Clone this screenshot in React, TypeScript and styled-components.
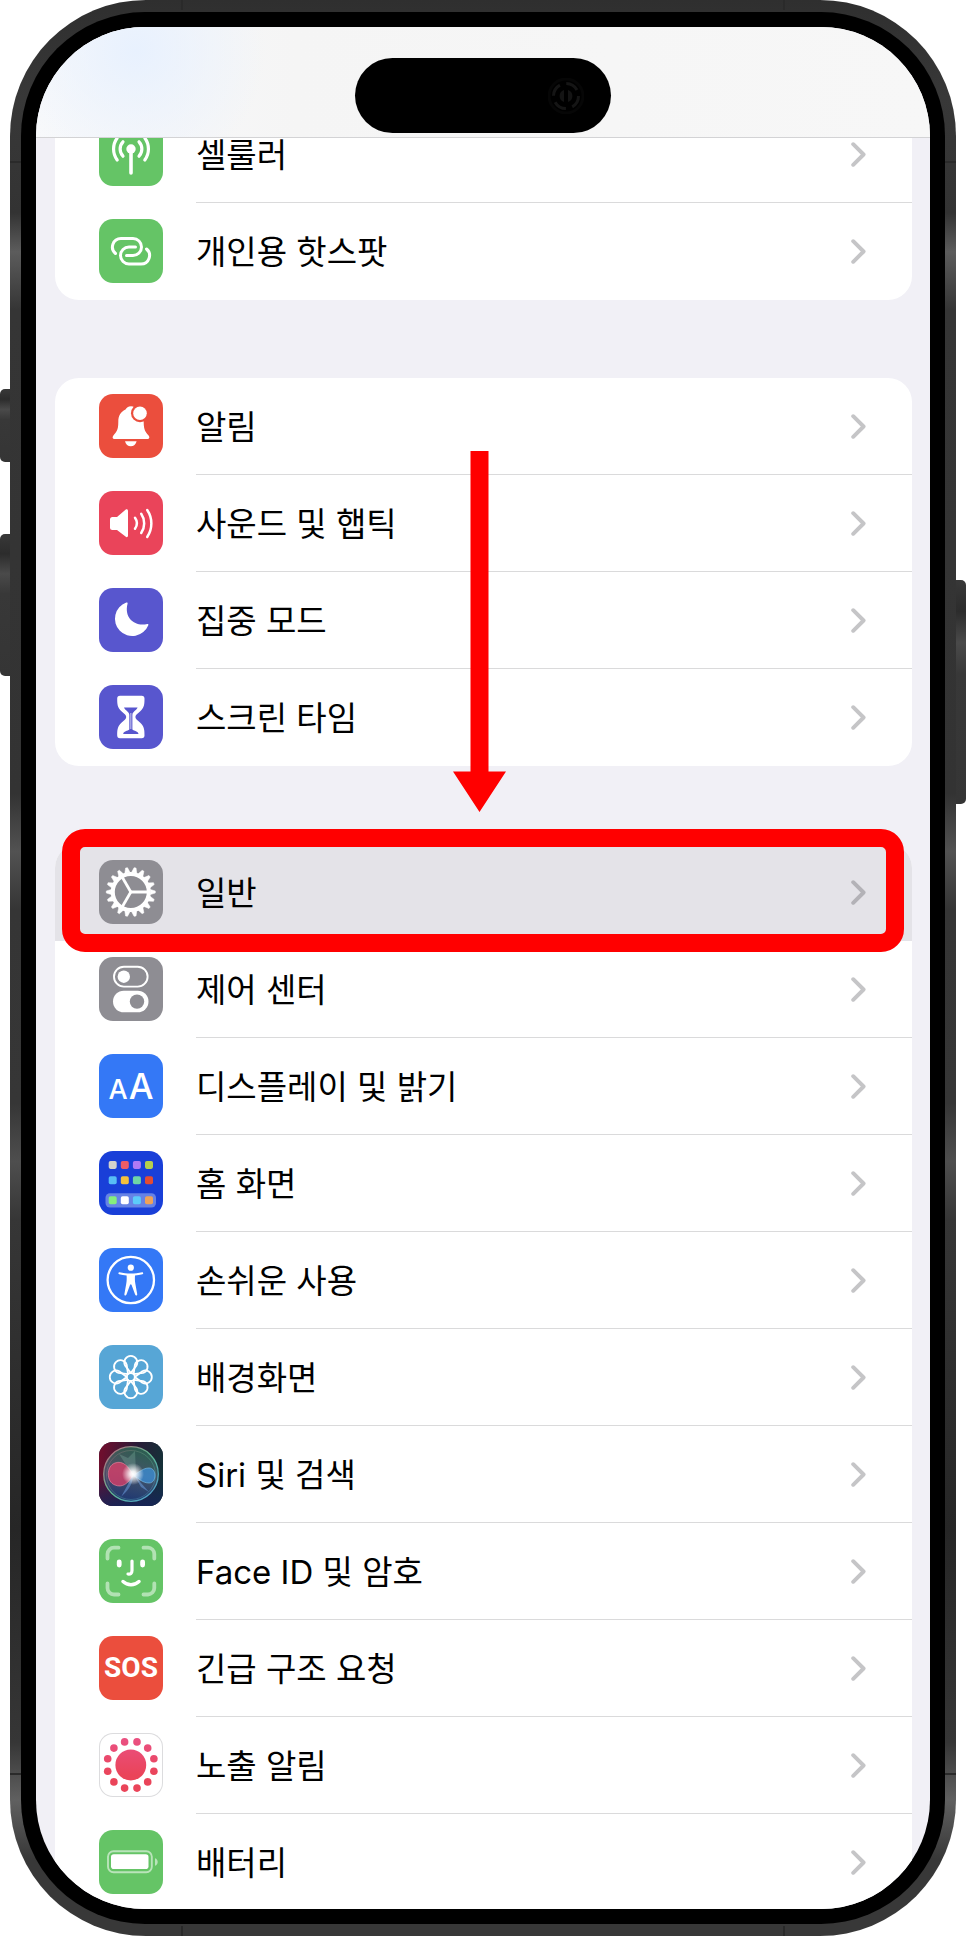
import React from 'react';
import styled, { createGlobalStyle, css } from 'styled-components';

const GlobalStyle = createGlobalStyle`
  *, *::before, *::after { box-sizing: border-box; }
  html, body { margin: 0; background: #fff; }
  body {
    font-family: Inter, "Noto Sans CJK KR", "Noto Sans", sans-serif;
    color: #000;
  }
`;

const Stage = styled.div`
  position: relative;
  height: 100vh;
  min-height: 480px;
  padding: 0 10px;
`;

const Frame = styled.div`
  height: 100%;
  padding: 12px 11px;
  border-radius: 136px;
  background: linear-gradient(
    180deg,
    #2f2f2f 0%, #383838 5%, #333 11%, #5c5c5c 13%, #353535 16%,
    #333 41%, #525252 44%, #353535 47%, #363636 57%, #4e4e4e 60%,
    #363636 63%, #262626 79%, #363636 90%, #606060 93%, #383838 96%
  );
`;

const Bezel = styled.div`
  height: 100%;
  padding: 15px;
  border-radius: 124px;
  background: #000;
`;

const Screen = styled.div`
  position: relative;
  height: 100%;
  overflow: hidden;
  border-radius: 109px;
  background: #f1f0f6;
`;

const SideButton = styled.span<{ $side: 'left' | 'right'; $top: number; $length: number }>`
  position: absolute;
  top: ${(p) => p.$top}px;
  ${(p) => p.$side}: 0;
  width: 10px;
  height: ${(p) => p.$length}px;
  border-radius: ${(p) => (p.$side === 'left' ? '5px 0 0 5px' : '0 5px 5px 0')};
  background: linear-gradient(180deg, #383838, #2c2c2c 14%, #4a4a4a 28%, #383838 42%, #353535);
`;

const AntennaLine = styled.span<{ $v: 'top' | 'bottom'; $h: 'left' | 'right'; $upright?: boolean }>`
  position: absolute;
  ${(p) =>
    p.$upright
      ? css`
          ${p.$v}: 0;
          ${p.$h}: 181px;
          width: 2px;
          height: 10px;
        `
      : css`
          ${p.$v}: 161px;
          ${p.$h}: 10px;
          width: 11px;
          height: 2px;
        `}
  background: #2a2a2a;
`;

const StatusBar = styled.header`
  position: absolute;
  inset: 0 0 auto;
  z-index: 2;
  display: flex;
  justify-content: center;
  align-items: flex-start;
  height: 111px;
  padding-top: 31px;
  border-bottom: 1px solid #d3d3d5;
  background:
    radial-gradient(circle at 100px 24px, #e8f1fe 0, rgba(240, 244, 250, 0) 130px),
    linear-gradient(90deg, #f8f9fb 0, #f5f5f5 260px, #f7f7f7 100%);
`;

const Island = styled.div`
  display: flex;
  justify-content: flex-end;
  align-items: center;
  width: 256px;
  height: 75px;
  padding-right: 27px;
  border-radius: 38px;
  background: #000;
`;

const Scroller = styled.main`
  display: flex;
  flex-direction: column;
  gap: 78px;
  height: 100%;
  padding: 79px 18px 0 19px;
  overflow-y: auto;
  scrollbar-width: none;
`;

const Group = styled.ul<{ $continued?: boolean }>`
  position: relative;
  flex: none;
  margin: 0;
  padding: 0;
  list-style: none;
  border-radius: ${(p) => (p.$continued ? '0 0 24px 24px' : '24px')};
  background: #fff;
`;

const Item = styled.li`
  position: relative;
`;

const RowLink = styled.a<{ $pressed?: boolean }>`
  display: flex;
  gap: 33px;
  height: 97px;
  padding-left: 44px;
  color: inherit;
  text-decoration: none;
  ${(p) =>
    p.$pressed &&
    css`
      border-radius: 24px 24px 0 0;
      background: #e4e3e8;
    `}
`;

const RowBody = styled.span<{ $divided: boolean }>`
  display: flex;
  flex: 1;
  align-items: center;
  justify-content: space-between;
  height: 100%;
  padding-right: 46px;
  border-bottom: 1px solid ${(p) => (p.$divided ? '#dadadb' : 'transparent')};
`;

const Label = styled.span`
  padding-top: 2px;
  font-size: 33px;
  line-height: 48px;
  white-space: nowrap;
`;

const Tile = styled.span<{ $bg: string; $outlined?: boolean }>`
  display: flex;
  flex: none;
  align-items: center;
  justify-content: center;
  width: 64px;
  height: 64px;
  margin-top: 16px;
  overflow: hidden;
  border-radius: 14px;
  background: ${(p) => p.$bg};
  box-shadow: ${(p) => (p.$outlined ? 'inset 0 0 0 1px #dcdcde' : 'none')};
  color: #fff;
`;

const SizeLetters = styled.span`
  display: flex;
  align-items: baseline;
  gap: 1px;
  padding-top: 3px;
  font-size: 27px;
  font-weight: 500;
  line-height: 40px;
`;

const LargeLetter = styled.span`
  font-size: 35px;
`;

const Sos = styled.span`
  font-family: Roboto, "Liberation Sans", sans-serif;
  font-size: 28px;
  font-weight: 700;
  line-height: 40px;
`;

const Highlight = styled.span`
  position: absolute;
  inset: -15px 8px -11px 7px;
  z-index: 1;
  border: 18px solid #f00;
  border-radius: 23px;
  pointer-events: none;
`;

const Arrow = styled.svg`
  position: absolute;
  top: 73px;
  left: calc(50% - 31px);
  z-index: 1;
  pointer-events: none;
`;

const Drawing = ({ children }: { children: React.ReactNode }) => (
  <svg width="64" height="64" viewBox="0 0 64 64" fill="none" stroke="none" aria-hidden="true">
    {children}
  </svg>
);

const range = (n: number) => Array.from({ length: n }, (_, i) => i);

const Cellular = () => (
  <Drawing>
    <g stroke="#fff" strokeWidth="3.2" strokeLinecap="round">
      <path d="M32 28V51" strokeWidth="3.6" />
      <path d="M24 34.2A10.5 10.5 0 0 1 24 19.8M40 34.2A10.5 10.5 0 0 0 40 19.8" />
      <path d="M18.2 38A18.5 18.5 0 0 1 18.2 16M45.8 38A18.5 18.5 0 0 0 45.8 16" />
    </g>
    <circle cx="32" cy="27" r="4.7" fill="#fff" />
  </Drawing>
);

const Hotspot = () => (
  <Drawing>
    <g stroke="#fff" strokeWidth="3" strokeLinecap="round">
      <path d="M16.5 34.5A8.5 8.5 0 0 1 22 19.5H34A8.5 8.5 0 0 1 34 36.5H27.5" />
      <path d="M47.5 30A8.5 8.5 0 0 1 42 45H30A8.5 8.5 0 0 1 30 28H36.5" />
    </g>
  </Drawing>
);

const Bell = () => (
  <Drawing>
    <path
      fill="#fff"
      d="M32 12.3c-3 0-4.3 1.8-5.5 3.2C21.3 18 19.3 22 19.3 28c0 9-2.300 10-4.900 13.500-1.500 2.300-.6 3.500 1.300 3.500h32.600c1.900 0 2.800-1.200 1.300-3.500C46.500 38 44.700 36 44.700 28c0-6-2-10-7.200-12.500C36.300 14.100 35 12.300 32 12.300Z"
    />
    <path fill="#fff" d="M26 47.2h11.6c-.6 3-3 5-5.8 5s-5.200-2-5.800-5Z" />
    <circle cx="41" cy="19.2" r="9" fill="#eb4e3d" />
    <circle cx="41" cy="19.2" r="6.8" fill="#fff" />
  </Drawing>
);

const Speaker = () => (
  <Drawing>
    <path
      fill="#fff"
      d="M13.5 26H18L26.5 18.800C27.700 17.900 29 18.400 29 20V44.500C29 46.200 27.600 46.600 26.500 45.600L18 39H13.500A2.500 2.500 0 0 1 11 36.500V28.500A2.500 2.500 0 0 1 13.500 26Z"
    />
    <g stroke="#fff" strokeWidth="2.5" strokeLinecap="round">
      <path d="M36 26.8A9.5 9.5 0 0 1 36 37.800" />
      <path d="M42.2 22.8A17 17 0 0 1 42.200 42" />
      <path d="M48.2 19A24 24 0 0 1 48.200 46" />
    </g>
  </Drawing>
);

const Moon = () => (
  <Drawing>
    <path
      fill="#fff"
      d="M28.6 15.6C24.5 31 37 39 48.200 36c.9-.2 1.400.4 1.100 1.200A17.300 17.300 0 1 1 27.300 14.500c.9-.3 1.500.2 1.300 1.100Z"
    />
  </Drawing>
);

const Hourglass = () => (
  <Drawing>
    <path
      fill="#fff"
      d="M21 10.7H42.7C44.600 10.700 45.500 12 45.500 13.500C45.500 18.500 45.500 22.500 41 26.500C38 29 36.400 30 36.400 32C36.400 34 38 35 41 37.500C45.500 41.500 45.500 45.500 45.500 50.500C45.500 52 44.600 53.300 42.700 53.300H21C19 53.300 18.200 52 18.200 50.500C18.200 45.500 18.200 41.500 22.700 37.500C25.700 35 27.200 34 27.200 32C27.200 30 25.700 29 22.700 26.500C18.200 22.500 18.200 18.500 18.200 13.500C18.200 12 19 10.700 21 10.700Z"
    />
    <path
      fill="#5856ce"
      d="M25 22.5H38.600C37.500 25.500 33.400 26.500 33.400 30V44.500C35 46 39.300 46 39.500 49H24.200C24.400 46 28.700 46 30.300 44.500V30C30.300 26.500 26 25.500 25 22.500Z"
    />
    <path stroke="#fff" strokeWidth=".7" d="M31.850 28V44" />
  </Drawing>
);

const Gear = () => (
  <Drawing>
    <g transform="translate(31.8 32)" stroke="#fff">
      <circle r="18" strokeWidth="4" />
      {range(18).map((i) => (
        <path key={i} d="M19.5-2.600L24.500-1V1L19.500 2.600Z" fill="#fff" strokeWidth=".5" transform={`rotate(${i * 20})`} />
      ))}
      {[0, 120, 240].map((a) => (
        <path key={a} d="M0 0H17" strokeWidth="2.8" transform={`rotate(${a})`} />
      ))}
    </g>
  </Drawing>
);

const Switches = () => (
  <Drawing>
    <rect x="15" y="9.8" width="33.6" height="19.8" rx="9.9" stroke="#fff" strokeWidth="1.9" />
    <circle cx="24.8" cy="19.7" r="6.2" fill="#fff" />
    <rect x="14" y="33.7" width="35.5" height="21.6" rx="10.8" fill="#fff" />
    <circle cx="38" cy="44.6" r="7.2" fill="#8e8d93" />
  </Drawing>
);

const homeColors = [
  ['#d4d2cc', '#ee5d66', '#b07af5', '#b6d04c'],
  ['#58bdf5', '#f5c03c', '#6fd5a6', '#e34c33'],
  ['#85ee7d', '#ffffff', '#5ccbfa', '#f0a258'],
];

const HomeGrid = () => (
  <Drawing>
    <rect x="6.5" y="42.3" width="50.5" height="14.2" rx="4.5" fill="#6683e6" />
    {homeColors.map((row, r) =>
      row.map((c, i) => (
        <rect key={`${r}-${i}`} x={9.7 + i * 12.1} y={[9.9, 25.3, 45.3][r]} width="8" height="8" rx="1.8" fill={c} />
      )),
    )}
  </Drawing>
);

const Accessibility = () => (
  <Drawing>
    <circle cx="31.8" cy="32" r="23.2" stroke="#fff" strokeWidth="2.3" />
    <circle cx="31.8" cy="19.7" r="3.1" fill="#fff" />
    <path
      fill="#fff"
      d="M20.5 24.3C24 25.200 28 25.600 31.800 25.600S39.600 25.200 43.200 24.300C44.400 24.100 44.700 26 43.500 26.300C41 27 38.500 27.300 36 27.600C35.800 31 35.800 33 36.400 36L38.200 46C38.500 47.700 36.600 48.200 36.100 46.600L32.600 37C32.200 36 31.400 36 31 37L27.500 46.600C27 48.200 25.100 47.700 25.400 46L27.200 36C27.800 33 27.800 31 27.600 27.600C25 27.300 22.500 27 20.100 26.300C18.900 26 19.300 24.100 20.500 24.300Z"
    />
  </Drawing>
);

const Flower = () => (
  <Drawing>
    <g transform="translate(31.8 32)" stroke="#fff" strokeWidth="1.8" strokeLinejoin="round">
      <circle r="4" />
      {range(8).map((i) => (
        <path key={i} d="M0-4L-5.800-11.600A6.500 6.500 0 1 1 5.800-11.600Z" transform={`rotate(${i * 45})`} />
      ))}
    </g>
  </Drawing>
);

const Siri = () => (
  <Drawing>
    <defs>
      <linearGradient id="siri-bg" x1="0" y1="0.4" x2="1" y2="0.6">
        <stop offset="0" stopColor="#6d0f2e" />
        <stop offset=".5" stopColor="#2a1c38" />
        <stop offset="1" stopColor="#123338" />
      </linearGradient>
      <linearGradient id="siri-floor" x1="0" y1="0" x2="0" y2="1">
        <stop offset=".5" stopColor="#16245a" stopOpacity="0" />
        <stop offset="1" stopColor="#16245a" stopOpacity=".85" />
      </linearGradient>
      <linearGradient id="siri-orb" x1=".7" y1="0" x2=".5" y2="1">
        <stop offset="0" stopColor="#2a7455" />
        <stop offset=".5" stopColor="#4f6478" />
        <stop offset="1" stopColor="#20407e" />
      </linearGradient>
      <linearGradient id="siri-ring" x1="0" y1="0" x2="1" y2="1">
        <stop offset="0" stopColor="#c0607c" />
        <stop offset=".5" stopColor="#5fb890" />
        <stop offset="1" stopColor="#4a98d8" />
      </linearGradient>
      <radialGradient id="siri-glow">
        <stop offset="0" stopColor="#fff" />
        <stop offset=".25" stopColor="#fff" stopOpacity=".9" />
        <stop offset="1" stopColor="#fff" stopOpacity="0" />
      </radialGradient>
    </defs>
    <rect width="64" height="64" fill="url(#siri-bg)" />
    <rect width="64" height="64" fill="url(#siri-floor)" />
    <circle cx="32" cy="32" r="27.3" fill="url(#siri-orb)" fillOpacity=".75" stroke="url(#siri-ring)" strokeWidth="1.3" />
    <circle cx="32" cy="33" r="24.5" stroke="url(#siri-ring)" strokeOpacity=".35" />
    <path d="M34 33C29 42 23 46 16 43C7 40 7 24 16 21C24 18 30 25 34 33Z" fill="#df3d6a" fillOpacity=".75" stroke="#f08aa4" strokeOpacity=".6" />
    <path d="M34 33C41 30 44 26 50 26C58 26 58 41 50 41C44 41 40 37 34 33Z" fill="#3c8fd8" fillOpacity=".75" stroke="#7cc4f0" strokeOpacity=".6" />
    <path d="M34 33L22 55C27 50 34 44 34 33ZM35 33L50 50L42 45Z" fill="#6fa4e8" fillOpacity=".5" />
    <path d="M33 32L20 12L29 16L36 9L37 31Z" fill="#a4e0c6" fillOpacity=".22" />
    <circle cx="34" cy="32" r="11" fill="url(#siri-glow)" />
  </Drawing>
);

const Face = () => (
  <Drawing>
    <g stroke="#fff" strokeLinecap="round">
      <path
        strokeOpacity=".5"
        strokeWidth="3.8"
        d="M8.5 19.5V15A6.500 6.500 0 0 1 15 8.700H19.500M44.500 8.700H49A6.500 6.500 0 0 1 55.300 15V19.500M55.300 44.500V49A6.500 6.500 0 0 1 49 55.500H44.500M19.500 55.500H15A6.500 6.500 0 0 1 8.500 49V44.500"
      />
      <path strokeWidth="4.8" d="M20.2 22.8V26M43.600 22.800V26" />
      <path strokeWidth="3.2" d="M33 22V31.5C33 34.300 31.500 35.300 29 35" />
      <path strokeWidth="3.5" d="M24 42.5C28.500 46.800 35.500 46.800 40 42.500" />
    </g>
  </Drawing>
);

const Exposure = () => (
  <Drawing>
    <defs>
      <linearGradient id="exposure-pink" gradientUnits="userSpaceOnUse" x1="0" y1="-24" x2="0" y2="10">
        <stop offset="0" stopColor="#ea5080" />
        <stop offset="1" stopColor="#ea4459" />
      </linearGradient>
    </defs>
    <g transform="translate(31.8 32)" fill="url(#exposure-pink)">
      <circle r="15.4" />
      {range(12).map((i) => {
        const a = ((i * 30 + 15) * Math.PI) / 180;
        return <circle key={i} cx={23.9 * Math.cos(a)} cy={23.9 * Math.sin(a)} r="3.8" />;
      })}
    </g>
  </Drawing>
);

const Battery = () => (
  <Drawing>
    <rect x="9" y="21.2" width="43.8" height="21" rx="5.5" stroke="#fff" strokeOpacity=".55" strokeWidth="1.9" />
    <rect x="12" y="24.3" width="37.5" height="14.8" rx="2.8" fill="#fff" />
    <path fill="#fff" fillOpacity=".55" d="M56 28.2C59.600 29.300 59.600 34.700 56 35.800Z" />
  </Drawing>
);

const Chevron = () => (
  <svg width="15" height="25" viewBox="0 0 15 25" fill="none" stroke="currentColor" aria-hidden="true">
    <path d="M2.2 2.2L12.6 12.5L2.200 22.800" strokeWidth="3.9" strokeLinecap="round" strokeLinejoin="round" />
  </svg>
);

const ChevronTint = styled.span<{ $pressed?: boolean }>`
  display: flex;
  color: ${(p) => (p.$pressed ? '#b3b2b7' : '#c5c5c7')};
`;

type Row = {
  label: string;
  bg: string;
  icon: React.ReactNode;
  outlined?: boolean;
  pressed?: boolean;
};

const green = '#65c466';
const red = '#eb4e3d';
const indigo = '#5856ce';
const gray = '#8e8d93';
const blue = '#3478f6';

const connectivity: Row[] = [
  { label: '셀룰러', bg: green, icon: <Cellular /> },
  { label: '개인용 핫스팟', bg: green, icon: <Hotspot /> },
];

const attention: Row[] = [
  { label: '알림', bg: red, icon: <Bell /> },
  { label: '사운드 및 햅틱', bg: '#ea445a', icon: <Speaker /> },
  { label: '집중 모드', bg: indigo, icon: <Moon /> },
  { label: '스크린 타임', bg: indigo, icon: <Hourglass /> },
];

const system: Row[] = [
  { label: '일반', bg: gray, icon: <Gear />, pressed: true },
  { label: '제어 센터', bg: gray, icon: <Switches /> },
  {
    label: '디스플레이 및 밝기',
    bg: blue,
    icon: (
      <SizeLetters aria-hidden="true">
        A<LargeLetter>A</LargeLetter>
      </SizeLetters>
    ),
  },
  { label: '홈 화면', bg: '#193fd8', icon: <HomeGrid /> },
  { label: '손쉬운 사용', bg: blue, icon: <Accessibility /> },
  { label: '배경화면', bg: '#57a6d6', icon: <Flower /> },
  { label: 'Siri 및 검색', bg: '#1b1c34', icon: <Siri /> },
  { label: 'Face ID 및 암호', bg: green, icon: <Face /> },
  { label: '긴급 구조 요청', bg: red, icon: <Sos aria-hidden="true">SOS</Sos> },
  { label: '노출 알림', bg: '#fff', icon: <Exposure />, outlined: true },
  { label: '배터리', bg: green, icon: <Battery /> },
];

const SettingsGroup = ({
  rows,
  continued,
  children,
}: {
  rows: Row[];
  continued?: boolean;
  children?: React.ReactNode;
}) => (
  <Group $continued={continued}>
    {rows.map((row, i) => (
      <Item key={row.label}>
        <RowLink href="#" $pressed={row.pressed}>
          <Tile $bg={row.bg} $outlined={row.outlined}>
            {row.icon}
          </Tile>
          <RowBody $divided={!row.pressed && i < rows.length - 1}>
            <Label>{row.label}</Label>
            <ChevronTint $pressed={row.pressed}>
              <Chevron />
            </ChevronTint>
          </RowBody>
        </RowLink>
        {row.pressed && <Highlight />}
      </Item>
    ))}
    {children}
  </Group>
);

export default function App() {
  return (
    <>
      <GlobalStyle />
      <Stage>
        <SideButton $side="left" $top={389} $length={73} />
        <SideButton $side="left" $top={534} $length={142} />
        <SideButton $side="right" $top={580} $length={224} />
        <Frame>
          <Bezel>
            <Screen>
              <StatusBar>
                <Island>
                  <svg width="36" height="36" viewBox="0 0 36 36" fill="none" aria-hidden="true">
                    <circle cx="18" cy="18" r="17" stroke="#060606" strokeWidth="3" />
                    <circle cx="18" cy="18" r="12.5" stroke="#151515" strokeWidth="3" strokeDasharray="13 6.6" />
                    <path d="M16 12A6.3 6.3 0 0 0 16 24ZM20 12A6.300 6.300 0 0 1 20 24Z" fill="#141414" />
                  </svg>
                </Island>
              </StatusBar>
              <Scroller>
                <SettingsGroup rows={connectivity} continued />
                <SettingsGroup rows={attention}>
                  <li aria-hidden="true">
                    <Arrow width="53" height="361" viewBox="0 0 53 361">
                      <path d="M17.5 0H35.5V320.5H53L26.500 361L0 320.500H17.500Z" fill="#f00" />
                    </Arrow>
                  </li>
                </SettingsGroup>
                <SettingsGroup rows={system} />
              </Scroller>
            </Screen>
          </Bezel>
        </Frame>
        <AntennaLine $v="top" $h="left" />
        <AntennaLine $v="top" $h="right" />
        <AntennaLine $v="bottom" $h="left" />
        <AntennaLine $v="bottom" $h="right" />
        <AntennaLine $v="top" $h="left" $upright />
        <AntennaLine $v="top" $h="right" $upright />
        <AntennaLine $v="bottom" $h="left" $upright />
        <AntennaLine $v="bottom" $h="right" $upright />
      </Stage>
    </>
  );
}
